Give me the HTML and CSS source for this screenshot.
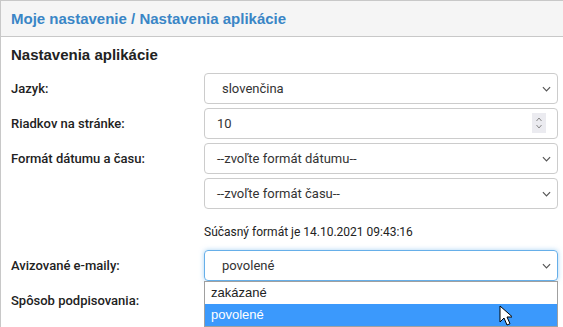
FILE: index.html
```html
<!DOCTYPE html>
<html lang="sk">
<head>
    <meta charset="UTF-8">
    <meta name="viewport" content="width=device-width, initial-scale=1.0">
    <title>Moje nastavenie</title>
    <link rel="stylesheet" href="styles.css">
</head>
<body>

    <div class="panel">
        <div class="panel-heading">Moje nastavenie / Nastavenia aplikácie</div>

        <div class="panel-body">
            <h3 class="section-title">Nastavenia aplikácie</h3>

            <div class="form-row">
                <label>Jazyk:</label>
                <div class="control select wide">slovenčina
                    <svg class="chevron" viewBox="0 0 10 6"><path d="M1 1l4 4 4-4"/></svg>
                </div>
            </div>

            <div class="form-row">
                <label>Riadkov na stránke:</label>
                <div class="control">10
                    <span class="spinner">
                        <svg viewBox="0 0 8 14"><path d="M1.5 5l2.5-3 2.5 3M1.5 9l2.5 3 2.5-3"/></svg>
                    </span>
                </div>
            </div>

            <div class="form-row">
                <label>Formát dátumu a času:</label>
                <div class="control select">--zvoľte formát dátumu--
                    <svg class="chevron" viewBox="0 0 10 6"><path d="M1 1l4 4 4-4"/></svg>
                </div>
            </div>

            <div class="form-row">
                <label></label>
                <div class="control select">--zvoľte formát času--
                    <svg class="chevron" viewBox="0 0 10 6"><path d="M1 1l4 4 4-4"/></svg>
                </div>
            </div>

            <div class="form-row note-row">
                <label></label>
                <div class="note">Súčasný formát je 14.10.2021 09:43:16</div>
            </div>

            <div class="form-row">
                <label>Avizované e-maily:</label>
                <div class="control select wide focused">povolené
                    <svg class="chevron" viewBox="0 0 10 6"><path d="M1 1l4 4 4-4"/></svg>
                    <ul class="dropdown">
                        <li>zakázané</li>
                        <li class="selected">povolené
                            <svg class="cursor" viewBox="0 0 13 21"><path d="M1 1v16l4-4 3 7 3-1.3-3-6.7h5.5z"/></svg>
                        </li>
                    </ul>
                </div>
            </div>

            <div class="form-row">
                <label>Spôsob podpisovania:</label>
                <div class="control select"></div>
            </div>
        </div>
    </div>

</body>
</html>
```

FILE: styles.css
```css
/* General Styles */
html, body {
    overflow: hidden;
}

body {
    margin: 0;
    padding: 0;
    font-family: Roboto, "Noto Sans", sans-serif;
    font-size: 13px;
    color: #333;
    background-color: #fff;
}

.panel {
    border: 1px solid #c8c8c8;
    border-right: none;
    height: 400px;
}

.panel-heading {
    background-color: #f5f5f5;
    border-bottom: 1px solid #c8c8c8;
    height: 35px;
    line-height: 35px;
    padding-left: 10px;
    font-family: "Liberation Sans", Arial, sans-serif;
    font-size: 15px;
    font-weight: bold;
    color: #3a86c6;
}

.panel-body {
    padding: 0 5px 0 10px;
}

.section-title {
    margin: 0;
    height: 36px;
    line-height: 36px;
    font-family: "Liberation Sans", Arial, sans-serif;
    font-size: 15px;
    font-weight: bold;
    color: #222;
}

.form-row {
    display: grid;
    grid-template-columns: 193px 1fr;
    align-items: center;
    margin-bottom: 4px;
}

.form-row label {
    font-weight: 500;
    font-size: 13px;
    color: #222;
}

.control {
    position: relative;
    height: 29px;
    line-height: 29px;
    border: 1px solid #ccc;
    border-radius: 4px;
    padding-left: 12px;
    color: #333;
}

.control.wide {
    padding-left: 17px;
}

.control.focused {
    border-color: #66afe9;
    box-shadow: 0 0 5px rgba(102, 175, 233, 0.55);
}

.chevron {
    position: absolute;
    right: 6px;
    top: 12px;
    width: 9px;
    height: 6px;
    fill: none;
    stroke: #555;
    stroke-width: 1.3;
}

.spinner {
    position: absolute;
    right: 11px;
    top: 4px;
    width: 14px;
    height: 20px;
    background-color: #ebebf0;
    display: flex;
    align-items: center;
    justify-content: center;
}

.spinner svg {
    width: 8px;
    height: 14px;
    fill: none;
    stroke: #888;
    stroke-width: 1;
}

.note-row {
    height: 33px;
    margin-bottom: 4px;
}

.note {
    padding-top: 5px;
    font-size: 12px;
    color: #222;
}

.dropdown {
    position: absolute;
    left: -1px;
    right: -1px;
    top: 30px;
    margin: 0;
    padding: 0;
    list-style: none;
    background-color: #fff;
    border: 1px solid #a0a0a0;
    font-family: "Liberation Sans", Arial, sans-serif;
    font-size: 13px;
    z-index: 2;
}

.dropdown li {
    position: relative;
    height: 22px;
    line-height: 21px;
    padding-left: 6px;
    color: #222;
}

.dropdown li.selected {
    background-color: #3b99fc;
    color: #fff;
}

.cursor {
    position: absolute;
    left: 294px;
    top: 1px;
    width: 13px;
    height: 21px;
    fill: #fff;
    stroke: #000;
    stroke-width: 1;
}
```
